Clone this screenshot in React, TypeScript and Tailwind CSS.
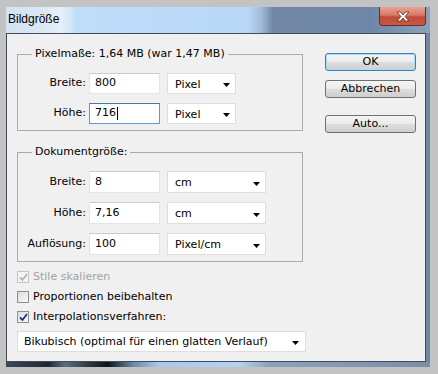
import React from "react";

const font = "font-['DejaVu_Sans',Tahoma,sans-serif]";

function Arrow() {
  return (
    <svg width="7" height="4" viewBox="0 0 7 4" className="shrink-0">
      <path d="M0 0H7L3.5 4Z" fill="#000" />
    </svg>
  );
}

function TextBox({ value, focused, caret }: { value: string; focused?: boolean; caret?: boolean }) {
  return (
    <div
      className={
        "ml-[3px] flex h-full w-[71px] items-center bg-white pl-[5px] text-[11px] text-black border " +
        (focused
          ? "border-[#5d9acb] border-t-[#3d7bad]"
          : "border-[#e3e4ea] border-t-[#c9cbd2]")
      }
    >
      <span>{value}</span>
      {caret && <span className="ml-px h-[13px] w-px bg-black" />}
    </div>
  );
}

function Dropdown({ label, w }: { label: string; w: string }) {
  return (
    <div
      className={
        "ml-[7px] flex h-full items-center justify-between border border-[#dedede] bg-white pl-[7px] pr-[5px] pt-[3px] text-[11px] " +
        w
      }
    >
      <span>{label}</span>
      <Arrow />
    </div>
  );
}

function Row({
  label,
  value,
  unit,
  unitW,
  h,
  focused,
}: {
  label: string;
  value: string;
  unit: string;
  unitW: string;
  h: string;
  focused?: boolean;
}) {
  return (
    <div className={"flex items-center " + h}>
      <span className="w-[68px] text-right text-[11px]">{label}</span>
      <TextBox value={value} focused={focused} caret={focused} />
      <Dropdown label={unit} w={unitW} />
    </div>
  );
}

function Group({ title, children, className }: { title: string; children: React.ReactNode; className?: string }) {
  return (
    <fieldset className={"border border-[#aaaaaa] pt-[12px] pb-[6px] " + (className ?? "")}>
      <legend className="ml-[14px] px-[3px] text-[11px] leading-[14px]">{title}</legend>
      {children}
    </fieldset>
  );
}

function Check({ label, state }: { label: string; state: "disabled" | "off" | "on" }) {
  return (
    <div className="flex h-[20px] items-center">
      <div
        className={
          "flex h-[12px] w-[12px] items-center justify-center border " +
          (state === "disabled"
            ? "border-[#c4c4c4] bg-[#f4f4f4]"
            : "border-[#8e8f8f] bg-gradient-to-br from-[#dcdcdc] to-[#fafafa]")
        }
      >
        {state !== "off" && (
          <svg width="9" height="9" viewBox="0 0 9 9">
            <path
              d="M1 4.5L3.5 7L8 1"
              fill="none"
              stroke={state === "on" ? "#21337a" : "#b4b4b4"}
              strokeWidth="1.8"
            />
          </svg>
        )}
      </div>
      <span className={"ml-[4px] text-[11px] " + (state === "disabled" ? "text-[#a3a3a3]" : "text-black")}>
        {label}
      </span>
    </div>
  );
}

function Button({ label, primary, className }: { label: string; primary?: boolean; className?: string }) {
  return (
    <div
      className={
        "flex h-[18px] w-[91px] items-center justify-center rounded-[3px] border text-[11px] bg-[linear-gradient(180deg,#f4f4f4_0%,#ebebeb_50%,#dddddd_51%,#cfcfcf_100%)] " +
        (primary ? "border-[#3c7fb1] shadow-[inset_0_0_0_1px_#a9dcf5]" : "border-[#707070]") +
        " " +
        (className ?? "")
      }
    >
      {label}
    </div>
  );
}

export default function App() {
  return (
    <div className={"h-[374px] w-[438px] bg-[#c3c3c3] pl-[6px] pt-[7px] text-black " + font}>
      <div className="flex h-[360px] w-[424px] flex-col bg-[#71879e]">
        {/* title bar */}
        <div className="flex h-[26px] items-start bg-[linear-gradient(90deg,#d3e3f3_0%,#dae8f6_9%,#e6f0f9_13%,#bfdcf8_17%,#b9d8f8_57%,#a3bfdc_60%,#6f87a5_63%,#6e87a6_86%,#8ba2ba_100%)]">
          <span className="ml-[2px] mt-[5px] font-['Liberation_Sans',Arial,sans-serif] text-[12px] leading-[15px]">
            Bildgröße
          </span>
          <div className="ml-auto mr-[4px] flex h-[19px] w-[47px] items-center justify-center rounded-b-[4px] border border-t-0 border-[#6b2c24] bg-[linear-gradient(180deg,#e7a494_0%,#d77866_45%,#c34a36_55%,#c65a44_100%)]">
            <svg width="14" height="11" viewBox="0 0 14 11">
              <path
                d="M1 1H4.5L7 4L9.5 1H13L9 5.5L13 10H9.5L7 7L4.5 10H1L5 5.5Z"
                fill="#fff"
                stroke="#5a2a24"
                strokeWidth="0.8"
              />
            </svg>
          </div>
        </div>

        {/* content */}
        <div className="mr-[4px] flex flex-1 border border-[#434c56] bg-[#f0f0f0] pl-[10px] pt-[13px]">
          <div className="flex w-[289px] flex-col">
            <Group title="Pixelmaße: 1,64 MB (war 1,47 MB)" className="w-[286px]">
              <div className="flex flex-col gap-[9px]">
                <Row label="Breite:" value="800" unit="Pixel" unitW="w-[69px]" h="h-[21px]" />
                <Row label="Höhe:" value="716" unit="Pixel" unitW="w-[69px]" h="h-[21px]" focused />
              </div>
            </Group>
            <Group title="Dokumentgröße:" className="mt-[14px] w-[286px]">
              <div className="flex flex-col gap-[9px]">
                <Row label="Breite:" value="8" unit="cm" unitW="w-[99px]" h="h-[22px]" />
                <Row label="Höhe:" value="7,16" unit="cm" unitW="w-[99px]" h="h-[22px]" />
                <Row label="Auflösung:" value="100" unit="Pixel/cm" unitW="w-[99px]" h="h-[22px]" />
              </div>
            </Group>
            <div className="mt-[5px] flex flex-col">
              <Check label="Stile skalieren" state="disabled" />
              <Check label="Proportionen beibehalten" state="off" />
              <Check label="Interpolationsverfahren:" state="on" />
            </div>
            <div className="mt-[4px] flex h-[21px] w-[289px] items-center justify-between border border-[#dedede] bg-white pl-[6px] pr-[6px] pt-[2px] text-[11px]">
              <span>Bikubisch (optimal für einen glatten Verlauf)</span>
              <Arrow />
            </div>
          </div>

          <div className="ml-[19px] mt-[6px] flex flex-col">
            <Button label="OK" primary />
            <Button label="Abbrechen" className="mt-[9px]" />
            <Button label="Auto..." className="mt-[17px]" />
          </div>
        </div>

        {/* bottom frame */}
        <div className="h-[5px] bg-[linear-gradient(90deg,#3a4858_0%,#1e2833_10%,#5a6e84_14%,#2a323c_20%,#0e1218_24%,#6a8aa8_30%,#a9c9ea_36%,#b4d2f0_55%,#8aa2bc_62%,#7a8fa6_100%)]" />
      </div>
    </div>
  );
}
